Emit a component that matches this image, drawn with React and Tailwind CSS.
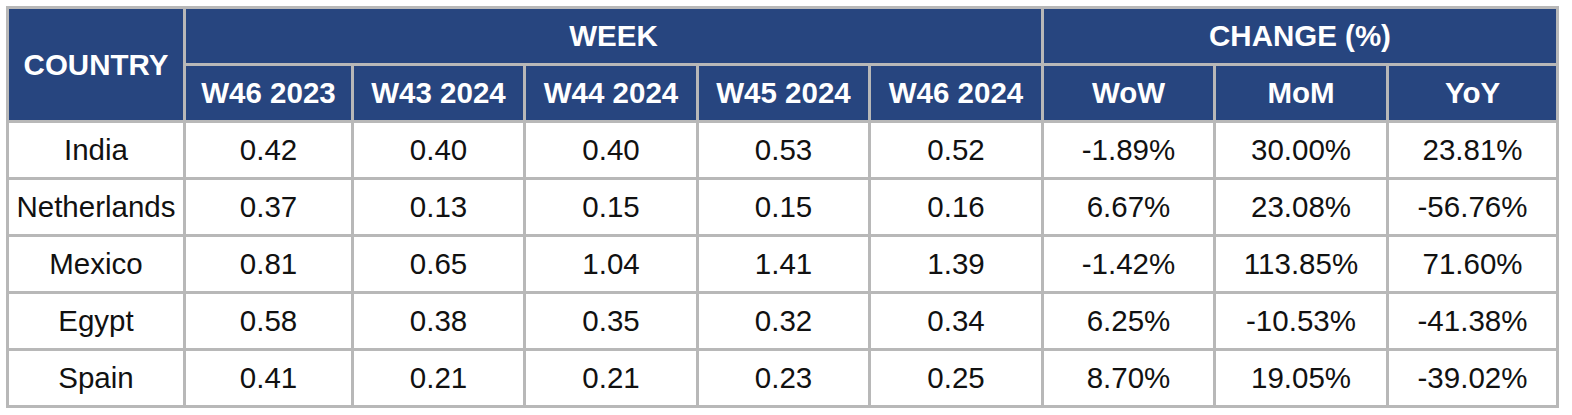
const weeks = ['W46 2023', 'W43 2024', 'W44 2024', 'W45 2024', 'W46 2024'];
const changes = ['WoW', 'MoM', 'YoY'];

const rows = [
  ['India', '0.42', '0.40', '0.40', '0.53', '0.52', '-1.89%', '30.00%', '23.81%'],
  ['Netherlands', '0.37', '0.13', '0.15', '0.15', '0.16', '6.67%', '23.08%', '-56.76%'],
  ['Mexico', '0.81', '0.65', '1.04', '1.41', '1.39', '-1.42%', '113.85%', '71.60%'],
  ['Egypt', '0.58', '0.38', '0.35', '0.32', '0.34', '6.25%', '-10.53%', '-41.38%'],
  ['Spain', '0.41', '0.21', '0.21', '0.23', '0.25', '8.70%', '19.05%', '-39.02%'],
];

function Head({ children, className = '' }) {
  return (
    <div className={`bg-[#27457f] text-white font-bold flex items-center justify-center h-[54px] ${className}`}>
      {children}
    </div>
  );
}

export default function App() {
  return (
    <div className="bg-white p-[6px] min-h-[415px]" style={{ fontFamily: '"Liberation Sans", Arial, sans-serif' }}>
      <div className="grid w-fit bg-[#b8b8b8] p-[3px] gap-[3px] text-[29.5px] leading-none grid-cols-[174px_165px_169px_170px_169px_170px_169px_170px_167px]">
        <Head className="row-span-2 h-auto">COUNTRY</Head>
        <Head className="col-span-5">WEEK</Head>
        <Head className="col-span-3">CHANGE (%)</Head>
        {weeks.map((w) => (
          <Head key={w}>{w}</Head>
        ))}
        {changes.map((c) => (
          <Head key={c}>{c}</Head>
        ))}
        {rows.map((r) =>
          r.map((v, i) => (
            <div key={r[0] + i} className="bg-white text-[#111] h-[54px] flex items-center justify-center whitespace-nowrap">
              {v}
            </div>
          ))
        )}
      </div>
    </div>
  );
}
